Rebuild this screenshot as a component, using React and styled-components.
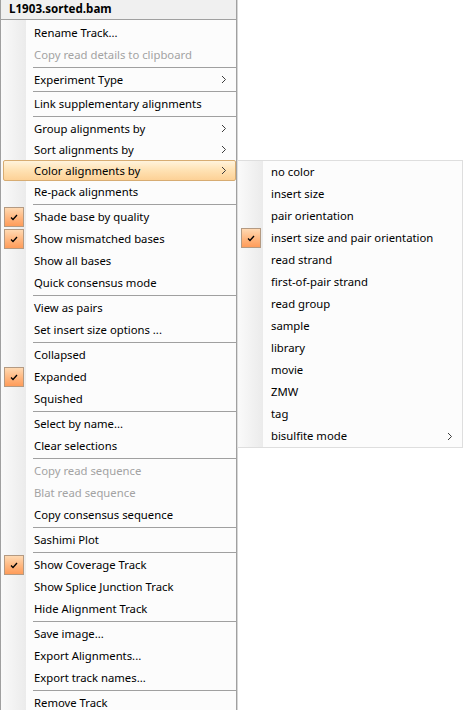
import React from "react";
import styled, { createGlobalStyle } from "styled-components";

const GlobalStyle = createGlobalStyle`
  html, body {
    margin: 0;
    padding: 0;
    background: #ffffff;
  }
  body {
    font-family: "Noto Sans", "Liberation Sans", sans-serif;
    font-size: 11.3px;
    color: #000;
    overflow: hidden;
  }
`;

// plain menus (submenu parents) sit a little tighter than check items
const mainItems = [
  { label: "Rename Track..." },
  { label: "Copy read details to clipboard", disabled: true },
  "sep",
  { label: "Experiment Type", sub: true, h: 21 },
  "sep",
  { label: "Link supplementary alignments" },
  "sep",
  { label: "Group alignments by", sub: true, h: 21 },
  { label: "Sort alignments by", sub: true, h: 21 },
  { label: "Color alignments by", sub: true, active: true, h: 21 },
  { label: "Re-pack alignments" },
  "sep",
  { label: "Shade base by quality", checked: true },
  { label: "Show mismatched bases", checked: true },
  { label: "Show all bases" },
  { label: "Quick consensus mode" },
  "sep",
  { label: "View as pairs" },
  { label: "Set insert size options ..." },
  "sep",
  { label: "Collapsed" },
  { label: "Expanded", checked: true },
  { label: "Squished" },
  "sep",
  { label: "Select by name..." },
  { label: "Clear selections" },
  "sep",
  { label: "Copy read sequence", disabled: true },
  { label: "Blat read sequence", disabled: true },
  { label: "Copy consensus sequence" },
  "sep",
  { label: "Sashimi Plot" },
  "sep",
  { label: "Show Coverage Track", checked: true },
  { label: "Show Splice Junction Track" },
  { label: "Hide Alignment Track" },
  "sep",
  { label: "Save image..." },
  { label: "Export Alignments..." },
  { label: "Export track names..." },
  "sep",
  { label: "Remove Track" },
];

const colorItems = [
  { label: "no color" },
  { label: "insert size" },
  { label: "pair orientation" },
  { label: "insert size and pair orientation", checked: true },
  { label: "read strand" },
  { label: "first-of-pair strand" },
  { label: "read group" },
  { label: "sample" },
  { label: "library" },
  { label: "movie" },
  { label: "ZMW" },
  { label: "tag" },
  { label: "bisulfite mode", sub: true },
];

const Page = styled.div`
  display: flex;
  align-items: flex-start;
  height: 710px;
  overflow: hidden;
`;

const Menu = styled.div`
  box-sizing: border-box;
  width: ${(p) => p.$width}px;
  flex-shrink: 0;
  margin-top: ${(p) => p.$top || 0}px;
  border-left: 1px solid ${(p) => p.$edge};
  border-right: 1px solid ${(p) => p.$edge};
  border-top: ${(p) => (p.$boxed ? `1px solid ${p.$edge}` : "none")};
  border-bottom: ${(p) => (p.$boxed ? `1px solid ${p.$edge}` : "none")};
  box-shadow: ${(p) => (p.$boxed ? "none" : "1px 0 0 #d6d6d6")};
  background: #fcfcfc;
`;

const Header = styled.div`
  height: 19px;
  line-height: 18px;
  padding-left: 8px;
  background: #f0f0f0;
  font-weight: 700;
  font-size: 11.6px;
  border-bottom: 1px solid #a0a0a0;
`;

const List = styled.div`
  padding-top: ${(p) => p.$pad || 0}px;
  background: linear-gradient(
      to right,
      #fafafa 0,
      #ebebeb 25px,
      #fcfcfc 25px
    )
    no-repeat;
`;

const Row = styled.div`
  padding-left: 2px;
  height: ${(p) => p.$h}px;
`;

const RowInner = styled.div`
  box-sizing: border-box;
  display: flex;
  align-items: center;
  height: 100%;
  border: 1px solid ${(p) => (p.$active ? "#d7ac72" : "transparent")};
  border-radius: 2px;
  background: ${(p) =>
    p.$active
      ? "linear-gradient(to bottom, #fff3dc 0%, #ffe3b6 45%, #fdd196 100%)"
      : "transparent"};
  color: ${(p) => (p.$disabled ? "#a3a3a3" : "#000")};
`;

const CheckCell = styled.div`
  width: 22px;
  height: 20px;
  display: flex;
  align-items: center;
  flex-shrink: 0;
`;

const CheckBox = styled.div`
  box-sizing: border-box;
  width: 20px;
  height: 20px;
  display: flex;
  align-items: center;
  justify-content: center;
  border: 1px solid #b49a82;
  background: linear-gradient(to bottom, #ffd9b2 0%, #ffb67e 55%, #ff9c5a 100%);
`;

const Label = styled.div`
  flex: 1;
  padding-left: 8px;
  white-space: nowrap;
  line-height: 20px;
`;

const Chevron = styled.div`
  width: 14px;
  flex-shrink: 0;
  display: flex;
  align-items: center;
  justify-content: flex-start;
`;

const Separator = styled.div`
  height: 3px;
  display: flex;
  align-items: center;
  padding-left: 32px;

  &::after {
    content: "";
    flex: 1;
    height: 1px;
    background: #a0a0a0;
  }
`;

const Check = () => (
  <svg width="8" height="7" viewBox="0 0 8 7">
    <path d="M1 3.5 L3 5.5 L7 1" fill="none" stroke="#000" strokeWidth="1.3" />
  </svg>
);

const Arrow = () => (
  <svg width="6" height="9" viewBox="0 0 6 9">
    <path d="M1 1 L4.5 4.5 L1 8" fill="none" stroke="#3c3c3c" strokeWidth="1" />
  </svg>
);

const MenuItems = ({ items }) =>
  items.map((item, i) =>
    item === "sep" ? (
      <Separator key={i} />
    ) : (
      <Row key={i} $h={item.h || 22}>
        <RowInner $active={item.active} $disabled={item.disabled}>
          <CheckCell>
            {item.checked && (
              <CheckBox>
                <Check />
              </CheckBox>
            )}
          </CheckCell>
          <Label>{item.label}</Label>
          <Chevron>{item.sub && <Arrow />}</Chevron>
        </RowInner>
      </Row>
    )
  );

const App = () => {
  return (
    <>
      <GlobalStyle />
      <Page>
        <Menu $width={237} $edge="#a0a0a0">
          <Header>L1903.sorted.bam</Header>
          <List $pad={2}>
            <MenuItems items={mainItems} />
          </List>
        </Menu>
        <Menu $width={226} $top={160} $edge="#dedede" $boxed>
          <List>
            <MenuItems items={colorItems} />
          </List>
        </Menu>
      </Page>
    </>
  );
};

export default App;
